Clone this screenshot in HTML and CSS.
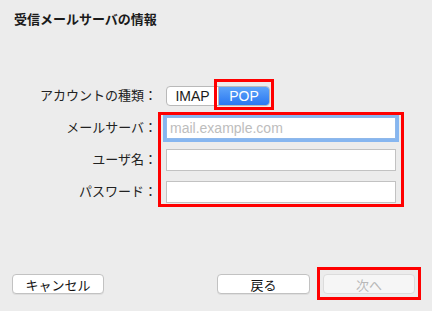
FILE: index.html
```html
<!DOCTYPE html>
<html lang="ja">
<head>
  <meta charset="UTF-8">
  <title>受信メールサーバの情報</title>
  <link rel="stylesheet" href="styles.css">
</head>
<body>
  <div class="window">
    <h1 class="title">受信メールサーバの情報</h1>

    <div class="form">
      <label class="label">アカウントの種類：</label>
      <div class="segmented">
        <span class="seg">IMAP</span>
        <span class="seg selected">POP</span>
      </div>

      <label class="label">メールサーバ：</label>
      <input class="field focused" type="text" placeholder="mail.example.com">

      <label class="label">ユーザ名：</label>
      <input class="field" type="text">

      <label class="label">パスワード：</label>
      <input class="field" type="password">
    </div>

    <div class="footer">
      <button class="btn">キャンセル</button>
      <div class="nav-btns">
        <button class="btn">戻る</button>
        <button class="btn disabled">次へ</button>
      </div>
    </div>

    <!-- red annotation boxes -->
    <div class="mark mark-pop"></div>
    <div class="mark mark-fields"></div>
    <div class="mark mark-next"></div>
  </div>
</body>
</html>
```

FILE: styles.css
```css
:root {
  --bg: #ececec;
  --fg: #1a1a1a;
  --border: #c2c2c2;
  --mark: #ff0000;
}
* { box-sizing: border-box; margin: 0; padding: 0; }
body {
  background: var(--bg);
  color: var(--fg);
  font-family: "Liberation Sans", "Noto Sans CJK JP", sans-serif;
  font-size: 13px;
}
.window { position: relative; width: 432px; height: 311px; overflow: hidden; }

.title { font-size: 13px; font-weight: 700; line-height: 16px; margin: 12px 0 0 14px; }

.form {
  display: grid;
  grid-template-columns: 143px 230px;
  grid-auto-rows: 32px;
  column-gap: 9px;
  align-items: center;
  margin: 52px 0 0 14px;
}
.label { text-align: right; line-height: 16px; color: #222; }

.segmented {
  display: flex;
  width: 104px;
  height: 20px;
  border: 1px solid #b9b9b9;
  border-radius: 4px;
  overflow: hidden;
  background: #fff;
}
.seg { display: flex; align-items: center; justify-content: center; font-size: 14px; }
.seg:first-child { width: 52px; border-right: 1px solid #b9b9b9; }
.seg.selected { flex: 1; color: #fff; background: linear-gradient(#5ea4f9, #2a77f1); }

.field {
  width: 230px;
  height: 22px;
  border: 1px solid var(--border);
  background: #fff;
  padding: 0 3px;
  font-family: "Liberation Sans", sans-serif;
  font-size: 14px;
  outline: none;
}
.field::placeholder { color: #bdbdbd; }
.field.focused { border-color: #8fb8ea; box-shadow: 0 0 0 3px #86b6f0; }

.footer {
  display: flex;
  justify-content: space-between;
  margin-top: 66px;
  padding: 0 17px 0 12px;
}
.nav-btns { display: flex; gap: 13px; }
.btn {
  width: 92px;
  height: 20px;
  border: 1px solid var(--border);
  border-radius: 4px;
  background: #fff;
  box-shadow: 0 1px 0 rgba(0,0,0,0.06);
  font-family: "Liberation Sans", "Noto Sans CJK JP", sans-serif;
  font-size: 13px;
  color: #111;
}
.nav-btns .btn:first-child { width: 93px; }
.btn.disabled { background: #f6f6f6; border-color: #dcdcdc; color: #b8b8b8; box-shadow: none; }

.mark { position: absolute; border: 3px solid var(--mark); }
.mark-pop { left: 214px; top: 79px; width: 60px; height: 31px; }
.mark-fields { left: 158px; top: 112px; width: 246px; height: 95px; }
.mark-next { left: 317px; top: 267px; width: 104px; height: 33px; }
```
